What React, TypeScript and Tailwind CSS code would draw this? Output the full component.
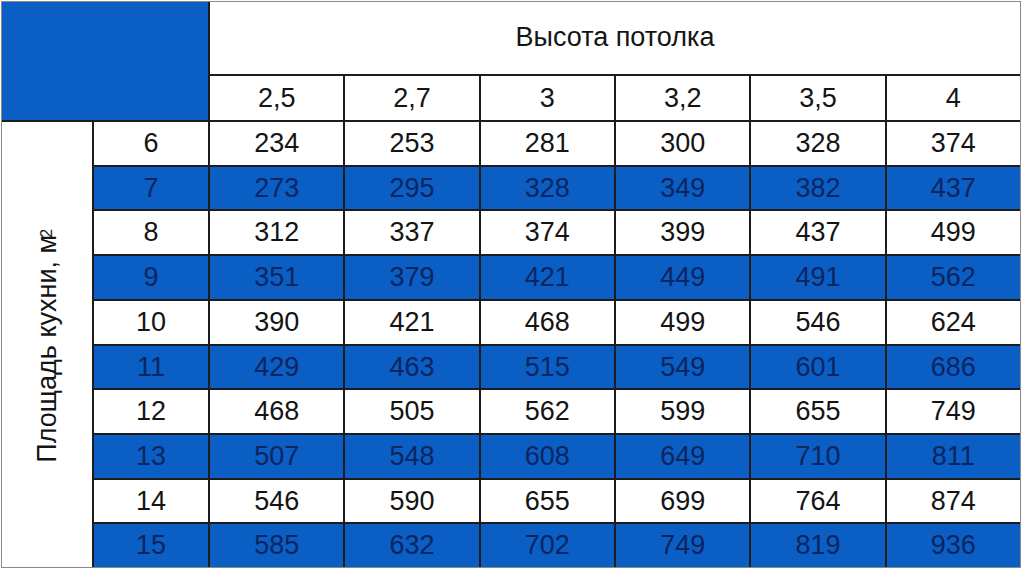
import React from "react";

const cols = ["2,5", "2,7", "3", "3,2", "3,5", "4"];
const rows: [number, number[]][] = [
  [6, [234, 253, 281, 300, 328, 374]],
  [7, [273, 295, 328, 349, 382, 437]],
  [8, [312, 337, 374, 399, 437, 499]],
  [9, [351, 379, 421, 449, 491, 562]],
  [10, [390, 421, 468, 499, 546, 624]],
  [11, [429, 463, 515, 549, 601, 686]],
  [12, [468, 505, 562, 599, 655, 749]],
  [13, [507, 548, 608, 649, 710, 811]],
  [14, [546, 590, 655, 699, 764, 874]],
  [15, [585, 632, 702, 749, 819, 936]],
];

export default function App() {
  return (
    <div className="w-[1024px] h-[573px] bg-white pl-[1px] pt-[1px] font-['Liberation_Sans',Arial,sans-serif]">
      <div className="w-[1020px] h-[567px] border border-[#8a8a8a] bg-[#1c1c1c] grid grid-cols-[90px_114px_repeat(6,1fr)] grid-rows-[72px_44px_repeat(10,1fr)] gap-[2px]">
        <div className="col-span-2 row-span-2 bg-[#0b5ec3]" />
        <div className="col-span-6 bg-white flex items-center justify-center text-[27px] text-[#141414] pb-[2px]">
          Высота потолка
        </div>
        {cols.map((c) => (
          <div key={c} className="bg-white flex items-center justify-center text-[27px] text-[#141414]">
            {c}
          </div>
        ))}
        <div className="row-span-10 bg-white flex items-center justify-center">
          <div className="[writing-mode:vertical-rl] rotate-180 text-[27px] text-[#141414] whitespace-nowrap">
            Площадь кухни, м<sup className="text-[16px] relative -top-[3px]">2</sup>
          </div>
        </div>
        {rows.map(([n, vals], i) => {
          const blue = i % 2 === 1;
          const cell = blue
            ? "bg-[#0b5ec3] text-[#0b2560]"
            : "bg-white text-[#141414]";
          return (
            <React.Fragment key={n}>
              <div className={`${cell} flex items-center justify-center text-[27px]`}>{n}</div>
              {vals.map((v, j) => (
                <div key={j} className={`${cell} flex items-center justify-center text-[27px]`}>
                  {v}
                </div>
              ))}
            </React.Fragment>
          );
        })}
      </div>
    </div>
  );
}
